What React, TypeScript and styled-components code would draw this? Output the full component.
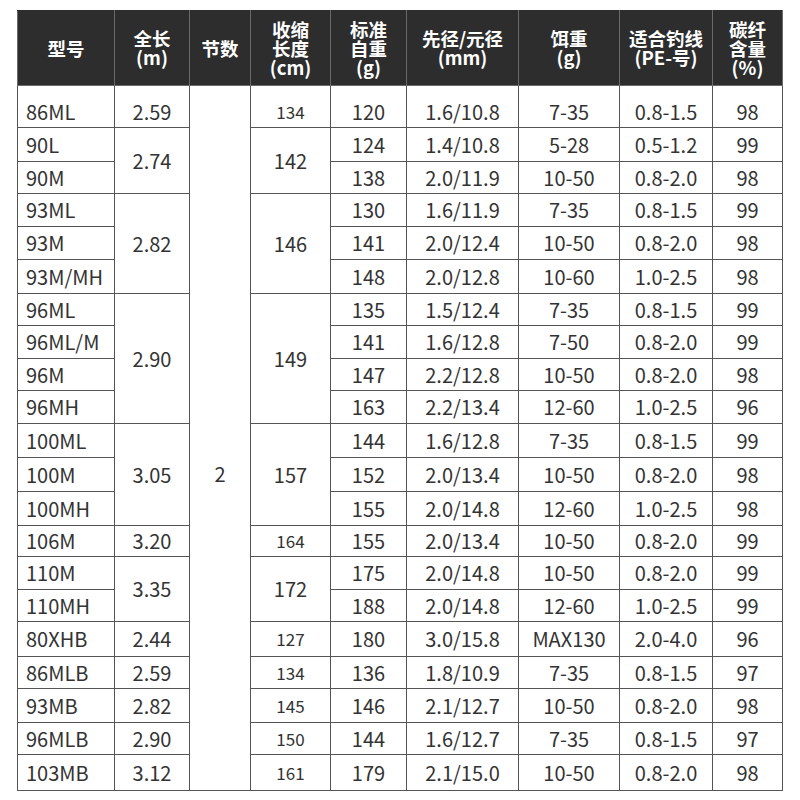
import React from "react";
import styled, { createGlobalStyle } from "styled-components";

const GlobalStyle = createGlobalStyle`
  html, body {
    margin: 0;
    padding: 0;
    background: #ffffff;
  }
  body {
    font-family: "Noto Sans CJK SC", "Noto Sans", sans-serif;
  }
`;

const Page = styled.div`
  width: 800px;
  height: 800px;
  padding: 10px 0 0 17px;
  box-sizing: border-box;
`;

const Table = styled.table`
  width: 765px;
  table-layout: fixed;
  border-collapse: collapse;
  color: #333333;
`;

const Head = styled.th`
  height: 74px;
  padding: 0;
  background: #2d2d2d;
  border: 1px solid #6a6a6a;
  border-top-color: #2d2d2d;
  color: #ffffff;
  font-size: 18.5px;
  font-weight: 700;
  line-height: 19px;
  text-align: center;
  vertical-align: middle;
`;

const Row = styled.tr<{ $h: number }>`
  height: ${(p) => p.$h}px;
`;

const Cell = styled.td<{ $left?: boolean; $small?: boolean; $top?: number }>`
  padding: ${(p) => p.$top ?? 0}px 0 0 ${(p) => (p.$left ? 8 : 0)}px;
  border: 1px solid #555555;
  font-size: ${(p) => (p.$small ? 17 : 20)}px;
  line-height: 24px;
  text-align: ${(p) => (p.$left ? "left" : "center")};
  vertical-align: middle;
  white-space: nowrap;
`;

const widths = [97, 75, 61, 80, 76, 112, 101, 93, 70];

const headers = [
  ["型号"],
  ["全长", "(m)"],
  ["节数"],
  ["收缩", "长度", "(cm)"],
  ["标准", "自重", "(g)"],
  ["先径/元径", "(mm)"],
  ["饵重", "(g)"],
  ["适合钓线", "(PE-号)"],
  ["碳纤", "含量", "(%)"],
];

type Span = { v: string; span: number; small?: boolean };

type RowData = {
  model: string;
  length?: Span;
  fold?: Span;
  weight: string;
  dia: string;
  lure: string;
  line: string;
  carbon: string;
  h: number;
};

const rows: RowData[] = [
  { model: "86ML", length: { v: "2.59", span: 1 }, fold: { v: "134", span: 1, small: true }, weight: "120", dia: "1.6/10.8", lure: "7-35", line: "0.8-1.5", carbon: "98", h: 42 },
  { model: "90L", length: { v: "2.74", span: 2 }, fold: { v: "142", span: 2 }, weight: "124", dia: "1.4/10.8", lure: "5-28", line: "0.5-1.2", carbon: "99", h: 34 },
  { model: "90M", weight: "138", dia: "2.0/11.9", lure: "10-50", line: "0.8-2.0", carbon: "98", h: 32 },
  { model: "93ML", length: { v: "2.82", span: 3 }, fold: { v: "146", span: 3 }, weight: "130", dia: "1.6/11.9", lure: "7-35", line: "0.8-1.5", carbon: "99", h: 33 },
  { model: "93M", weight: "141", dia: "2.0/12.4", lure: "10-50", line: "0.8-2.0", carbon: "98", h: 33 },
  { model: "93M/MH", weight: "148", dia: "2.0/12.8", lure: "10-60", line: "1.0-2.5", carbon: "98", h: 34 },
  { model: "96ML", length: { v: "2.90", span: 4 }, fold: { v: "149", span: 4 }, weight: "135", dia: "1.5/12.4", lure: "7-35", line: "0.8-1.5", carbon: "99", h: 32 },
  { model: "96ML/M", weight: "141", dia: "1.6/12.8", lure: "7-50", line: "0.8-2.0", carbon: "99", h: 33 },
  { model: "96M", weight: "147", dia: "2.2/12.8", lure: "10-50", line: "0.8-2.0", carbon: "98", h: 32 },
  { model: "96MH", weight: "163", dia: "2.2/13.4", lure: "12-60", line: "1.0-2.5", carbon: "96", h: 33 },
  { model: "100ML", length: { v: "3.05", span: 3 }, fold: { v: "157", span: 3 }, weight: "144", dia: "1.6/12.8", lure: "7-35", line: "0.8-1.5", carbon: "99", h: 34 },
  { model: "100M", weight: "152", dia: "2.0/13.4", lure: "10-50", line: "0.8-2.0", carbon: "98", h: 34 },
  { model: "100MH", weight: "155", dia: "2.0/14.8", lure: "12-60", line: "1.0-2.5", carbon: "98", h: 34 },
  { model: "106M", length: { v: "3.20", span: 1 }, fold: { v: "164", span: 1, small: true }, weight: "155", dia: "2.0/13.4", lure: "10-50", line: "0.8-2.0", carbon: "99", h: 31 },
  { model: "110M", length: { v: "3.35", span: 2 }, fold: { v: "172", span: 2 }, weight: "175", dia: "2.0/14.8", lure: "10-50", line: "0.8-2.0", carbon: "99", h: 33 },
  { model: "110MH", weight: "188", dia: "2.0/14.8", lure: "12-60", line: "1.0-2.5", carbon: "99", h: 32 },
  { model: "80XHB", length: { v: "2.44", span: 1 }, fold: { v: "127", span: 1, small: true }, weight: "180", dia: "3.0/15.8", lure: "MAX130", line: "2.0-4.0", carbon: "96", h: 35 },
  { model: "86MLB", length: { v: "2.59", span: 1 }, fold: { v: "134", span: 1, small: true }, weight: "136", dia: "1.8/10.9", lure: "7-35", line: "0.8-1.5", carbon: "97", h: 32 },
  { model: "93MB", length: { v: "2.82", span: 1 }, fold: { v: "145", span: 1, small: true }, weight: "146", dia: "2.1/12.7", lure: "10-50", line: "0.8-2.0", carbon: "98", h: 34 },
  { model: "96MLB", length: { v: "2.90", span: 1 }, fold: { v: "150", span: 1, small: true }, weight: "144", dia: "1.6/12.7", lure: "7-35", line: "0.8-1.5", carbon: "97", h: 32 },
  { model: "103MB", length: { v: "3.12", span: 1 }, fold: { v: "161", span: 1, small: true }, weight: "179", dia: "2.1/15.0", lure: "10-50", line: "0.8-2.0", carbon: "98", h: 36 },
];

const App = () => {
  return (
    <Page>
      <GlobalStyle />
      <Table>
        <colgroup>
          {widths.map((w, i) => (
            <col key={i} style={{ width: w }} />
          ))}
        </colgroup>
        <thead>
          <tr>
            {headers.map((lines, i) => (
              <Head key={i}>
                {lines.map((l, j) => (
                  <React.Fragment key={j}>
                    {j > 0 && <br />}
                    {l}
                  </React.Fragment>
                ))}
              </Head>
            ))}
          </tr>
        </thead>
        <tbody>
          {rows.map((r, i) => {
            // the first row carries extra space above its text
            const top = i === 0 ? 10 : 0;
            return (
              <Row key={r.model} $h={r.h}>
                <Cell $left $top={top}>{r.model}</Cell>
                {r.length && (
                  <Cell rowSpan={r.length.span} $top={r.length.span === 1 ? top : 0}>
                    {r.length.v}
                  </Cell>
                )}
                {i === 0 && (
                  <Cell rowSpan={rows.length} $top={71}>
                    2
                  </Cell>
                )}
                {r.fold && (
                  <Cell
                    rowSpan={r.fold.span}
                    $small={r.fold.small}
                    $top={r.fold.span === 1 ? top : 0}
                  >
                    {r.fold.v}
                  </Cell>
                )}
                <Cell $top={top}>{r.weight}</Cell>
                <Cell $top={top}>{r.dia}</Cell>
                <Cell $top={top}>{r.lure}</Cell>
                <Cell $top={top}>{r.line}</Cell>
                <Cell $top={top}>{r.carbon}</Cell>
              </Row>
            );
          })}
        </tbody>
      </Table>
    </Page>
  );
};

export default App;
